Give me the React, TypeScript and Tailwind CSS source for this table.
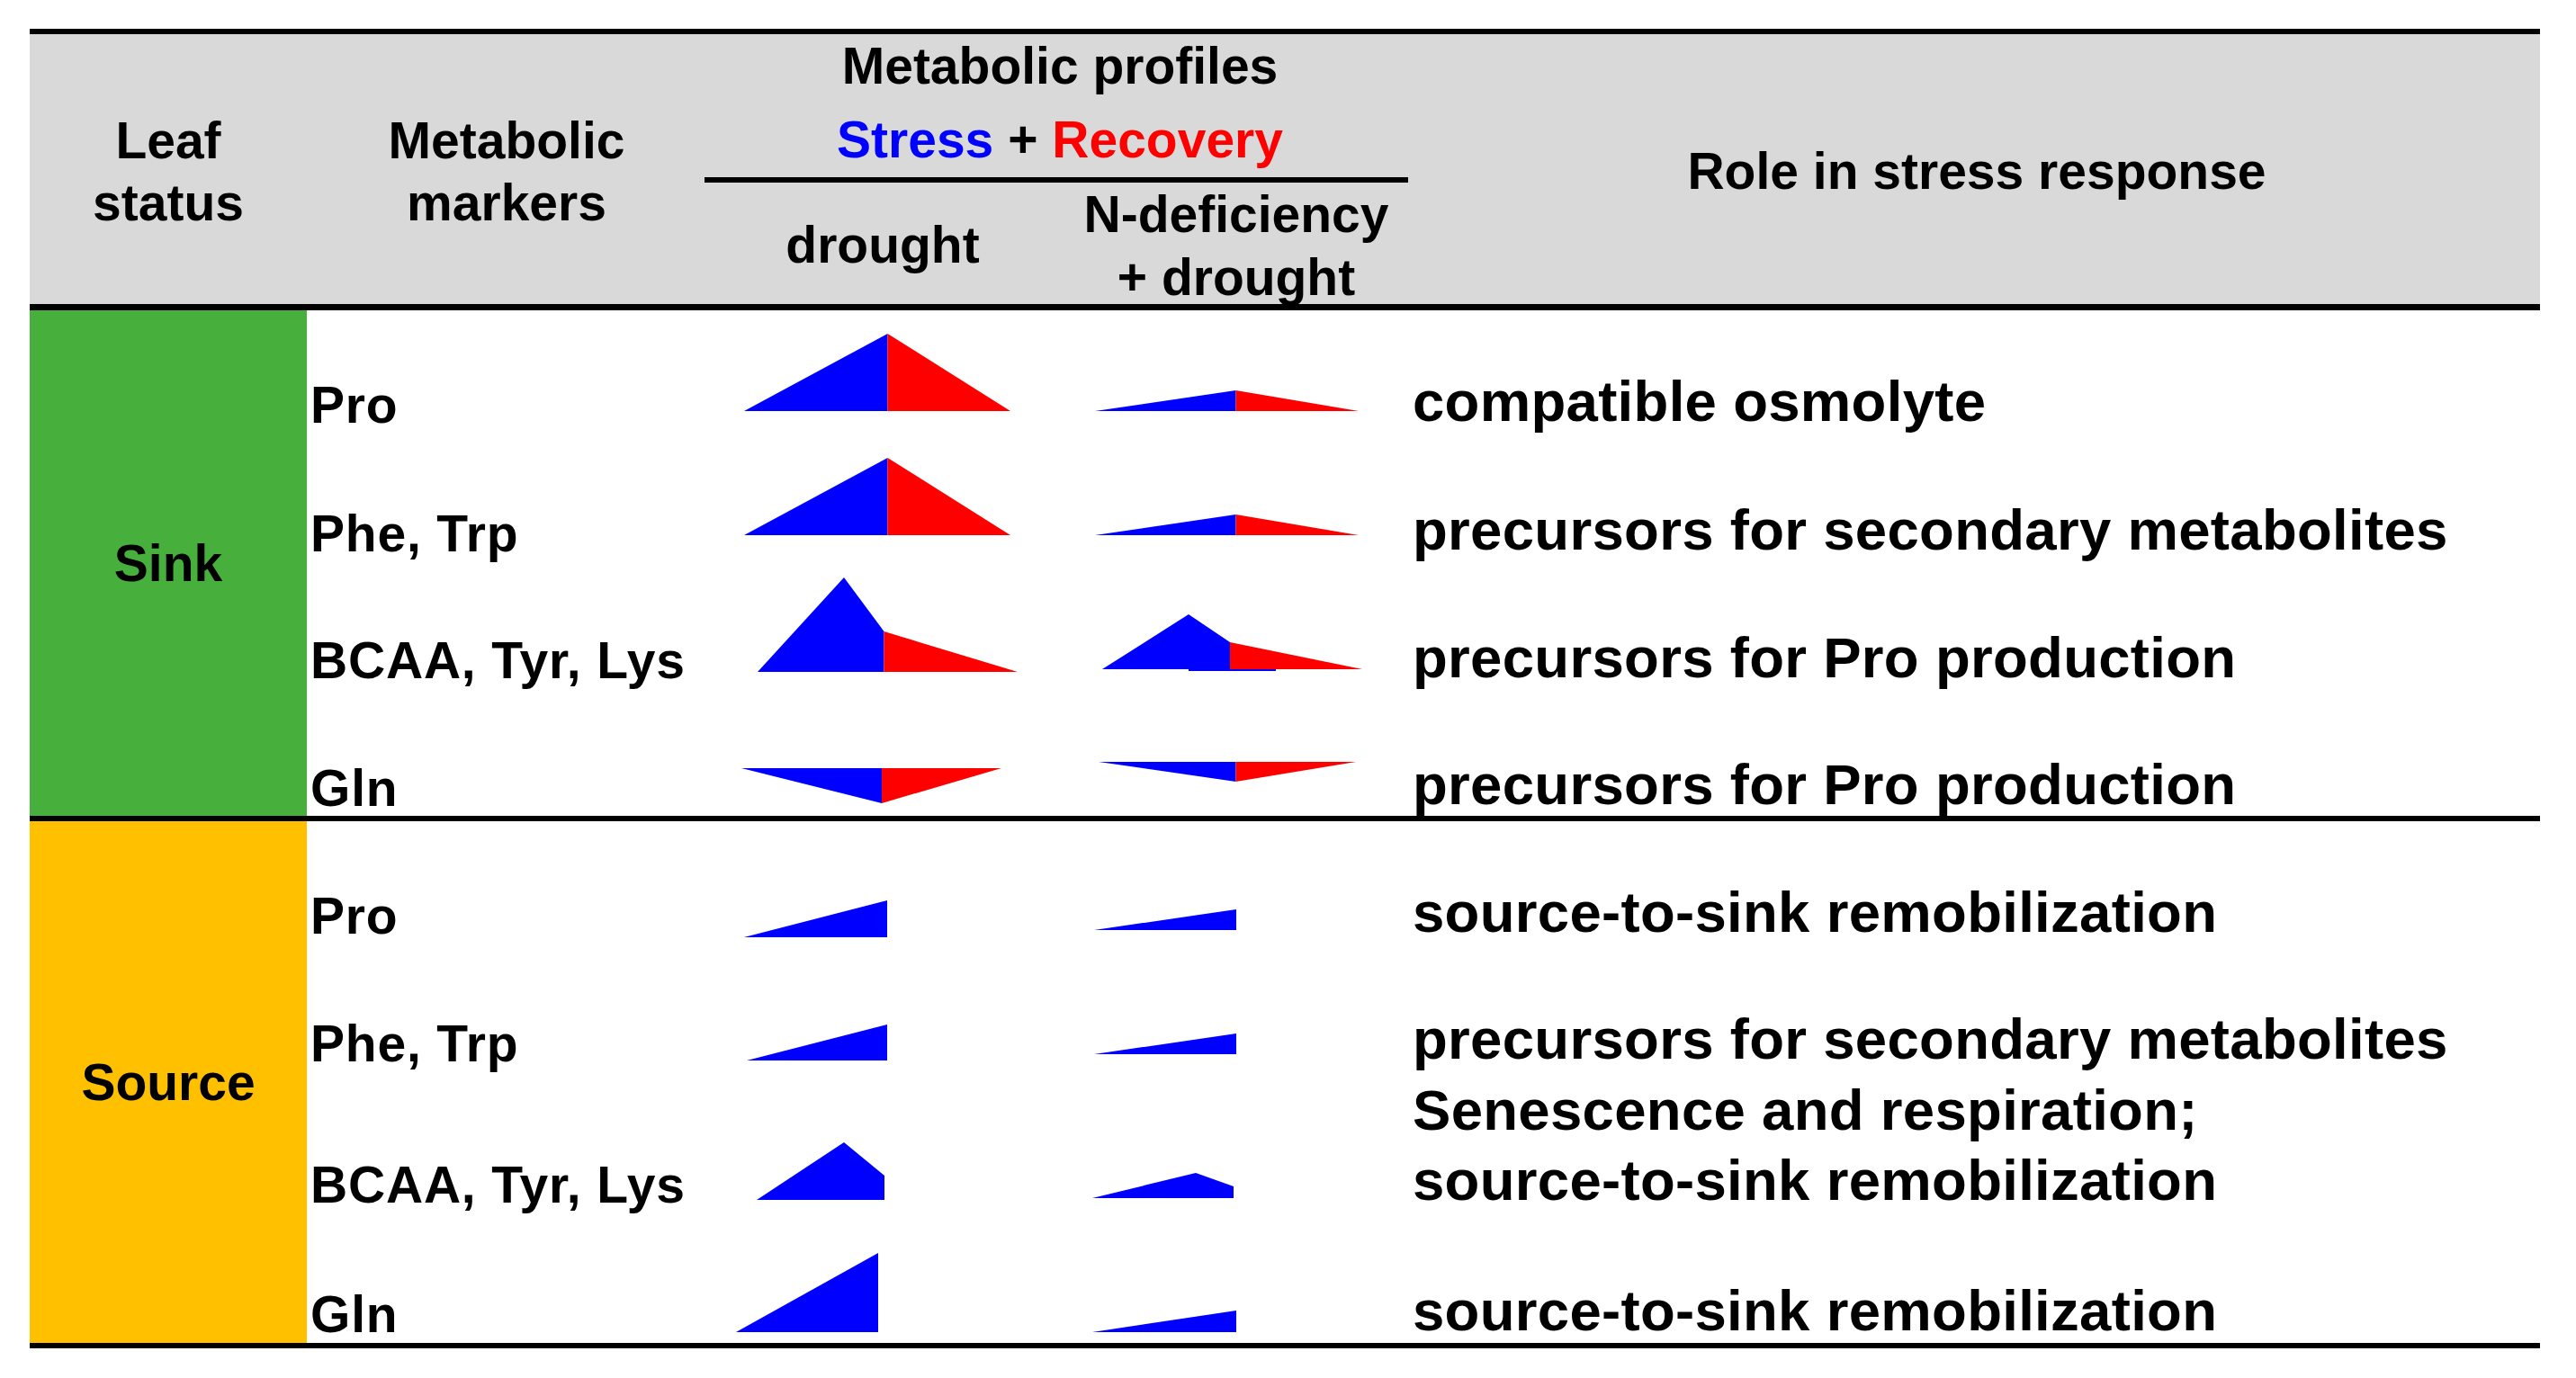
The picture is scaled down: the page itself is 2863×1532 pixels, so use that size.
type Pt = [number, number]
type Shape = { fill: string; pts: Pt[] }

interface Row {
  marker: string
  role: string[]
  height: number
  h: string
  markerPt: string
  rolePt: string
  drought: Shape[]
  ndef: Shape[]
}

const BLUE = '#0000ff'
const RED = '#ff0000'

const sinkRows: Row[] = [
  {
    marker: 'Pro',
    role: ['compatible osmolyte'],
    height: 140,
    h: 'h-[140px]',
    markerPt: 'pt-[70px]',
    rolePt: 'pt-[62px]',
    drought: [
      { fill: BLUE, pts: [[827, 457], [986.5, 371], [986.5, 457]] },
      { fill: RED, pts: [[986.5, 371], [1123, 457], [986.5, 457]] },
    ],
    ndef: [
      { fill: BLUE, pts: [[1217, 457], [1373.5, 434], [1373.5, 457]] },
      { fill: RED, pts: [[1373.5, 434], [1510, 457], [1373.5, 457]] },
    ],
  },
  {
    marker: 'Phe, Trp',
    role: ['precursors for secondary metabolites'],
    height: 140,
    h: 'h-[140px]',
    markerPt: 'pt-[73px]',
    rolePt: 'pt-[65px]',
    drought: [
      { fill: BLUE, pts: [[827, 595], [986.5, 509], [986.5, 595]] },
      { fill: RED, pts: [[986.5, 509], [1123, 595], [986.5, 595]] },
    ],
    ndef: [
      { fill: BLUE, pts: [[1217, 595], [1373.5, 572], [1373.5, 595]] },
      { fill: RED, pts: [[1373.5, 572], [1510, 595], [1373.5, 595]] },
    ],
  },
  {
    marker: 'BCAA, Tyr, Lys',
    role: ['precursors for Pro production'],
    height: 140,
    h: 'h-[140px]',
    markerPt: 'pt-[74px]',
    rolePt: 'pt-[67px]',
    drought: [
      { fill: BLUE, pts: [[842, 747], [938, 642], [982.5, 702], [982.5, 747]] },
      { fill: RED, pts: [[982.5, 702], [1131, 747], [982.5, 747]] },
    ],
    ndef: [
      { fill: BLUE, pts: [[1225, 744], [1321, 683], [1367, 714], [1367, 744]] },
      { fill: BLUE, pts: [[1321, 744], [1418, 744], [1418, 746], [1321, 746]] },
      { fill: RED, pts: [[1367, 714], [1514, 744], [1367, 744]] },
    ],
  },
  {
    marker: 'Gln',
    role: ['precursors for Pro production'],
    height: 142,
    h: 'h-[142px]',
    markerPt: 'pt-[76px]',
    rolePt: 'pt-[68px]',
    drought: [
      { fill: BLUE, pts: [[824, 854], [980, 854], [980, 893]] },
      { fill: RED, pts: [[980, 854], [1113, 854], [980, 893]] },
    ],
    ndef: [
      { fill: BLUE, pts: [[1221, 847], [1373.5, 847], [1373.5, 869]] },
      { fill: RED, pts: [[1373.5, 847], [1507, 847], [1373.5, 869]] },
    ],
  },
]

const sourceRows: Row[] = [
  {
    marker: 'Pro',
    role: ['source-to-sink remobilization'],
    height: 140,
    h: 'h-[140px]',
    markerPt: 'pt-[70px]',
    rolePt: 'pt-[62px]',
    drought: [{ fill: BLUE, pts: [[827, 1042], [986, 1001], [986, 1042]] }],
    ndef: [{ fill: BLUE, pts: [[1216, 1034], [1374, 1011], [1374, 1034]] }],
  },
  {
    marker: 'Phe, Trp',
    role: ['precursors for secondary metabolites'],
    height: 140,
    h: 'h-[140px]',
    markerPt: 'pt-[72px]',
    rolePt: 'pt-[63px]',
    drought: [{ fill: BLUE, pts: [[830, 1179], [986, 1139], [986, 1179]] }],
    ndef: [{ fill: BLUE, pts: [[1216, 1172], [1374, 1149], [1374, 1172]] }],
  },
  {
    marker: 'BCAA, Tyr, Lys',
    role: ['Senescence and respiration;', 'source-to-sink remobilization'],
    height: 160,
    h: 'h-[160px]',
    markerPt: 'pt-[89px]',
    rolePt: 'pt-[2px]',
    drought: [{ fill: BLUE, pts: [[841, 1334], [938, 1270], [983, 1307], [983, 1334]] }],
    ndef: [{ fill: BLUE, pts: [[1214, 1332], [1329, 1304], [1371, 1319], [1371, 1332]] }],
  },
  {
    marker: 'Gln',
    role: ['source-to-sink remobilization'],
    height: 140,
    h: 'h-[140px]',
    markerPt: 'pt-[73px]',
    rolePt: 'pt-[65px]',
    drought: [{ fill: BLUE, pts: [[818, 1481], [976, 1393], [976, 1481]] }],
    ndef: [{ fill: BLUE, pts: [[1214, 1481], [1374, 1457], [1374, 1481]] }],
  },
]

function Profile({ shapes, x, y, w, h }: { shapes: Shape[]; x: number; y: number; w: number; h: number }) {
  return (
    <svg
      width={w}
      height={h}
      viewBox={`${x} ${y} ${w} ${h}`}
      className="shrink-0 overflow-visible"
    >
      {shapes.map((s, i) => (
        <polygon key={i} fill={s.fill} points={s.pts.map((p) => p.join(',')).join(' ')} />
      ))}
    </svg>
  )
}

function ProfileRow({ row, top }: { row: Row; top: number }) {
  return (
    <div className={`flex shrink-0 ${row.h}`}>
      <div className={`w-[444px] shrink-0 pl-[4px] ${row.markerPt} text-[57px] leading-[70px] tracking-[0.8px] whitespace-nowrap`}>
        {row.marker}
      </div>
      <Profile shapes={row.drought} x={785} y={top} w={392} h={row.height} />
      <Profile shapes={row.ndef} x={1177} y={top} w={394} h={row.height} />
      <div className={`flex-1 -ml-[1px] ${row.rolePt} text-[63.5px] leading-[78px] tracking-[0.3px] whitespace-nowrap`}>
        {row.role.map((line) => (
          <div key={line}>{line}</div>
        ))}
      </div>
    </div>
  )
}

function Section({ label, bg, rows, top }: { label: string; bg: string; rows: Row[]; top: number }) {
  let y = top
  return (
    <div className="flex">
      <div className={`w-[308px] shrink-0 flex items-center justify-center text-[57px] leading-none ${bg}`}>
        {label}
      </div>
      <div className="flex-1 flex flex-col">
        {rows.map((row) => {
          const rowTop = y
          y += row.height
          return <ProfileRow key={row.marker} row={row} top={rowTop} />
        })}
      </div>
    </div>
  )
}

export default function App() {
  return (
    <div className="min-h-[1532px] bg-white pt-[32px] pl-[33px] font-['Liberation_Sans',Arial,sans-serif] font-bold text-black">
      <div className="w-[2790px]">
        {/* header */}
        <div className="flex h-[313px] bg-[#d9d9d9] border-t-[6px] border-b-[7px] border-black text-[57px] leading-[69px] text-center">
          <div className="w-[308px] shrink-0 flex items-center justify-center pt-[6px]">
            <div>
              Leaf
              <br />
              status
            </div>
          </div>
          <div className="w-[444px] shrink-0 flex items-center justify-center pt-[6px]">
            <div>
              Metabolic
              <br />
              markers
            </div>
          </div>
          <div className="w-[786px] shrink-0 flex flex-col">
            <div className="h-[159px] shrink-0 leading-[70px]">
              <div>Metabolic profiles</div>
              <div className="mt-[12px]">
                <span className="text-[#0000ff]">Stress</span> + <span className="text-[#ff0000]">Recovery</span>
              </div>
            </div>
            <div className="h-[6px] shrink-0 bg-black -ml-[2px] mr-[6px]" />
            <div className="flex h-[135px] shrink-0 leading-[70px]">
              <div className="w-[392px] flex items-center justify-center pt-[2px]">drought</div>
              <div className="w-[394px] flex items-center justify-center pt-[4px]">
                <div>
                  N-deficiency
                  <br />+ drought
                </div>
              </div>
            </div>
          </div>
          <div className="flex-1 flex items-center justify-center pt-[4px] leading-[70px]">Role in stress response</div>
        </div>

        <Section label="Sink" bg="bg-[#47b03d]" rows={sinkRows} top={345} />
        <div className="h-[6px] bg-black" />
        <Section label="Source" bg="bg-[#ffc000]" rows={sourceRows} top={913} />
        <div className="h-[6px] bg-black" />
      </div>
    </div>
  )
}
